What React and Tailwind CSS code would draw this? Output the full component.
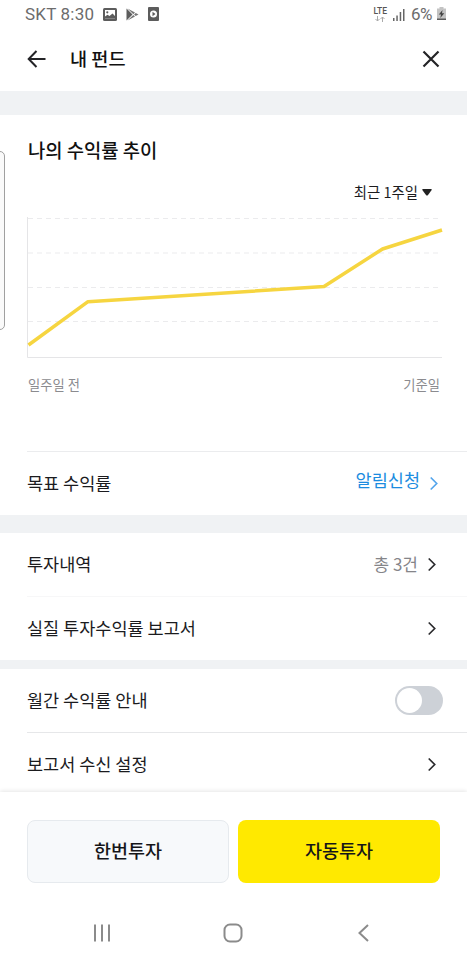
import React from "react";

const Chevron = ({ className = "text-[#2a2a2d]" }) => (
  <svg width="10" height="16" viewBox="0 0 10 16" fill="none" stroke="currentColor" className={className}>
    <path d="M1.700 1.500 7.700 7.500l-6 6" strokeWidth="1.700" />
  </svg>
);

const Row = ({ label, className = "", children }) => (
  <div className={`flex items-center justify-between ${className}`}>
    <span className="pb-[2px] text-[17.5px] text-[#1b1b1e]">{label}</span>
    {children}
  </div>
);

function StatusBar() {
  return (
    <div className="flex h-7 items-center pl-[25px] pr-[20px] font-['Roboto',sans-serif] text-[16.5px] text-[#6c6c6c]">
      <span className="pt-px text-[17px] tracking-[0.2px]">SKT 8:30</span>
      <svg className="ml-[9px]" width="14" height="13" viewBox="0 0 14 13">
        <rect width="14" height="13" rx="1.500" fill="#5c5c5c" />
        <path d="M2 2h10v8.500H2z" fill="#fff" />
        <circle cx="4.300" cy="4.300" r="1.100" fill="#5c5c5c" />
        <path d="M2 10.500V8.500L4.500 6.800 6.500 8 9.500 5.500 12 8v2.500z" fill="#5c5c5c" />
      </svg>
      <svg className="ml-[9px]" width="13" height="13" viewBox="0 0 13 13">
        <path d="M.5.5v12L6.500 6.500z" fill="#5c5c5c" />
        <path d="M1.500.5 9 4.500 7.300 6.200zM1.500 12.500 9 8.500 7.300 6.900zM9.700 5l2.800 1.500L9.700 8 8.100 6.500z" fill="#777" />
      </svg>
      <svg className="ml-[9px]" width="12" height="14" viewBox="0 0 12 14">
        <rect width="11" height="14" rx="1" fill="#5c5c5c" />
        <circle cx="5.500" cy="7" r="3.500" fill="#fff" />
        <path d="M4.500 4.800 7.500 7l-3 2.200z" fill="#5c5c5c" />
      </svg>
      <div className="ml-auto flex items-center">
        <div className="flex flex-col items-center">
          <span className="text-[8.5px] font-medium leading-[9px] text-[#555]">LTE</span>
          <svg width="10" height="6" viewBox="0 0 10 6" fill="none" stroke="#aaa">
            <path d="M2.500 0v5M.5 3l2 2 2-2M7.500 6V1M5.500 3l2-2 2 2" />
          </svg>
        </div>
        <svg className="ml-[6px]" width="12" height="13" viewBox="0 0 12 13" fill="#666">
          <path d="M0 10h1.500v3H0zM3.300 7.500h1.500V13H3.300zM6.700 4h1.500v9H6.700zM10 1h1.500v12H10z" />
        </svg>
        <span className="ml-[6px] w-[22px] whitespace-nowrap pt-px text-[17px] tracking-[-0.6px]">6%</span>
        <svg className="ml-[3px]" width="11" height="14" viewBox="0 0 11 14">
          <path d="M3.500 0h4v1.500H10V13H1V1.500h2.500z" fill="#c3c3c3" />
          <path d="M1 11.500h9V13H1z" fill="#5c5c5c" />
          <path d="M6.500 3 2.800 7.500H5L4.300 11l4-4.700H6z" fill="#444" />
        </svg>
      </div>
    </div>
  );
}

function ProfitChart() {
  return (
    <svg className="ml-[27px] mt-[15px] block" width="416" height="143" viewBox="0 0 416 143" fill="none">
      <path d="M1 1.500h414M1 36h414M1 70.500h414M1 104.500h414" stroke="#ebebed" strokeDasharray="5 4" />
      <path d="M.5 0v140.500H415" stroke="#e5e5e7" />
      <path d="M1.500 128 61 84.700 297 69.500 355.500 32 415 13" stroke="#f6d540" strokeWidth="3.500" strokeLinejoin="round" />
    </svg>
  );
}

export default function App() {
  return (
    <div className="relative flex h-[960px] w-[467px] flex-col overflow-hidden bg-white font-['Noto_Sans_CJK_KR',sans-serif] leading-none">
      <StatusBar />
      <header className="flex h-[63px] shrink-0 items-center pb-px pl-[27px] pr-[27px]">
        <svg width="19" height="18" viewBox="0 0 19 18" fill="none" stroke="#242427" strokeWidth="2">
          <path d="M18.500 9H2M9.500 1 1.700 9l7.800 8" />
        </svg>
        <h1 className="ml-[24px] pb-px text-[18.6px] font-medium text-[#111]">내 펀드</h1>
        <svg className="ml-auto" width="18" height="18" viewBox="0 0 18 18" fill="none" stroke="#242427" strokeWidth="2.200">
          <path d="m1.500 1.500 15 15M16.500 1.500l-15 15" />
        </svg>
      </header>
      <div className="h-6 shrink-0 bg-[#f0f2f4]" />

      <section className="h-[400px] shrink-0">
        <h2 className="ml-[28px] pt-[25px] text-[18.8px] font-medium leading-[19px] text-[#111]">나의 수익률 추이</h2>
        <div className="mt-[24px] flex h-[19px] items-center justify-end pr-[35px] text-[14.4px] text-[#1b1b1e]">
          <span className="pb-px">최근 1주일</span>
          <svg className="ml-[4px]" width="10" height="7" viewBox="0 0 10 7" fill="#222">
            <path d="M1 0h8q1 0 .7 1L6 6Q5 7 4 6L.3 1Q0 0 1 0z" />
          </svg>
        </div>
        <ProfitChart />
        <div className="mt-[16px] flex h-[18px] items-center justify-between pl-[28px] pr-[27px] text-[13.3px] text-[#8b8b8f]">
          <span>일주일 전</span>
          <span>기준일</span>
        </div>
        <Row label="목표 수익률" className="ml-[27px] mt-[57px] h-[64px] border-t border-[#ebecee] pr-[28px]">
          <span className="flex items-center">
            <span className="pb-[8px] text-[17.5px] text-[#1b8ce0]">알림신청</span>
            <Chevron className="ml-[9px] text-[#54a5ec]" />
          </span>
        </Row>
      </section>
      <div className="h-[18px] shrink-0 bg-[#f0f2f4]" />

      <section className="shrink-0">
        <Row label="투자내역" className="ml-[27px] h-[63px] pr-[30px]">
          <span className="flex items-center">
            <span className="pb-[2px] text-[17px] text-[#858589]">총 3건</span>
            <Chevron className="ml-[9px] text-[#2a2a2d]" />
          </span>
        </Row>
        <Row label="실질 투자수익률 보고서" className="ml-[27px] h-[64px] border-t border-[#f7f7f8] pr-[30px]">
          <Chevron />
        </Row>
      </section>
      <div className="h-[9px] shrink-0 bg-[#f0f2f4]" />

      <section className="shrink-0">
        <Row label="월간 수익률 안내" className="ml-[27px] h-[63px] pr-[24px]">
          <span className="flex h-[29px] w-[48px] items-center rounded-full bg-[#cdd1d7] pl-[2px]">
            <span className="size-[25px] rounded-full bg-white" />
          </span>
        </Row>
        <Row label="보고서 수신 설정" className="ml-[27px] h-[60px] border-t border-[#e6e7e9] pr-[30px] pt-[4px]">
          <Chevron />
        </Row>
      </section>

      <footer className="flex flex-1 flex-col bg-white shadow-[0_-1px_4px_rgba(0,0,0,0.10)]">
        <div className="flex gap-[9px] pl-[27px] pr-[27px] pt-[28px]">
          <button className="h-[63px] w-[202px] rounded-lg border border-[#e6eaee] bg-[#f7f9fb] pb-[2px] text-[18.5px] font-medium text-[#151518]">
            한번투자
          </button>
          <button className="h-[63px] w-[202px] rounded-lg bg-[#ffe900] pb-[2px] text-[18.5px] font-medium text-[#151518]">
            자동투자
          </button>
        </div>
        <nav className="mt-[40px] flex items-center pl-[93px]">
          <svg width="18" height="20" viewBox="0 0 18 20" stroke="#8b8b8b" strokeWidth="2" fill="none">
            <path d="M2 1.500v17M9 1.500v17M16 1.500v17" />
          </svg>
          <svg className="ml-[112px]" width="20" height="20" viewBox="0 0 20 20" stroke="#8b8b8b" strokeWidth="2" fill="none">
            <rect x="1.500" y="1.500" width="17" height="17" rx="5.500" />
          </svg>
          <svg className="ml-[115px]" width="11" height="20" viewBox="0 0 11 20" stroke="#8b8b8b" strokeWidth="2" fill="none">
            <path d="M10 2 1.500 10l8.500 8" />
          </svg>
        </nav>
      </footer>

      {/* Edge panel handle */}
      <div className="absolute -left-[10px] top-[151px] h-[179px] w-[15px] rounded-[5px] border border-[#a0a0a0] bg-[#fafafa]" />
    </div>
  );
}
